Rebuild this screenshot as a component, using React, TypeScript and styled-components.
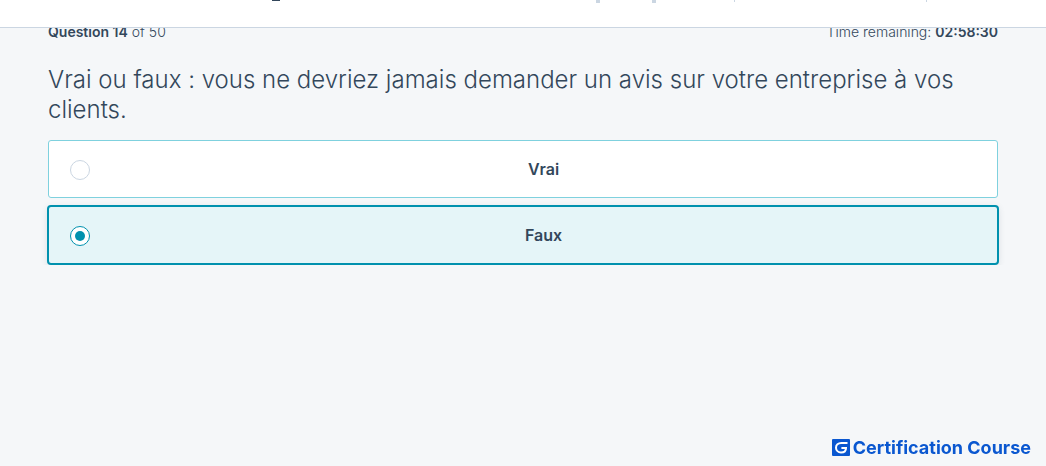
import React, { useState } from 'react';
import styled, { createGlobalStyle } from 'styled-components';

const GlobalStyle = createGlobalStyle`
  *, *::before, *::after { box-sizing: border-box; }
  body {
    margin: 0;
    background: #f5f7f9;
    color: #33475b;
    font-family: Inter, "Liberation Sans", sans-serif;
  }
`;

const Header = styled.header`
  position: relative;
  z-index: 1;
  display: flex;
  align-items: flex-start;
  height: 28px;
  background: #fff;
  border-bottom: 1px solid #cbd6e2;
`;

const TitleEdge = styled.span`
  width: 8px;
  height: 1px;
  margin-left: 272px;
  background: #33475b;
`;

const ToolEdge = styled.span<{ $gap: number; $thin?: boolean }>`
  width: ${(p) => (p.$thin ? 1 : 4)}px;
  height: ${(p) => (p.$thin ? 2 : 3)}px;
  margin-left: ${(p) => p.$gap}px;
  background: #cbd6e2;
`;

const Main = styled.main`
  margin-top: -8px;
  padding: 0 48px;
`;

const Meta = styled.div`
  display: flex;
  justify-content: space-between;
  font-size: 14px;
  line-height: 24px;
  font-weight: 300;
`;

const Strong = styled.strong`
  font-weight: 600;
`;

const Quiz = styled.fieldset`
  min-width: 0;
  margin: 0;
  padding: 0;
  border: 0;
`;

const Prompt = styled.legend`
  padding: 21px 0 15px;
  font-size: 24px;
  line-height: 30px;
  font-weight: 300;
`;

const Options = styled.div`
  display: flex;
  flex-direction: column;
  gap: 7px;
`;

const Option = styled.label<{ $selected: boolean }>`
  display: flex;
  align-items: center;
  height: ${(p) => (p.$selected ? 60 : 58)}px;
  margin: 0 ${(p) => (p.$selected ? -1 : 0)}px;
  padding-left: 21px;
  border: ${(p) => (p.$selected ? '2px solid #0091ae' : '1px solid #7fd1de')};
  border-radius: ${(p) => (p.$selected ? 4 : 3)}px;
  background: ${(p) => (p.$selected ? '#e5f5f8' : '#fff')};
  box-shadow: ${(p) => (p.$selected ? '0 2px 6px rgba(45, 62, 80, 0.12)' : 'none')};
  cursor: pointer;
`;

const Radio = styled.input`
  appearance: none;
  display: grid;
  place-items: center;
  flex: none;
  width: 20px;
  height: 20px;
  margin: 2px 0 0;
  border: 1px solid #cbd6e2;
  border-radius: 50%;
  background: #fff;

  &:checked { border-color: #0091ae; }
  &:checked::before {
    content: "";
    width: 10px;
    height: 10px;
    border-radius: 50%;
    background: #0091ae;
  }
`;

const OptionText = styled.span`
  flex: 1;
  text-align: center;
  font-size: 16px;
  line-height: 24px;
  font-weight: 600;
`;

const Brand = styled.div`
  position: fixed;
  right: 15px;
  bottom: 6px;
  display: flex;
  align-items: center;
  gap: 3px;
  color: #0a57d0;
  font-size: 18px;
  line-height: 24px;
  font-weight: 700;
`;

const answers = ['Vrai', 'Faux'];

export default function App() {
  const [choice, setChoice] = useState('Faux');
  return (
    <>
      <GlobalStyle />
      <Header>
        <TitleEdge />
        <ToolEdge $gap={316} />
        <ToolEdge $gap={52} />
        <ToolEdge $gap={78} $thin />
        <ToolEdge $gap={191} $thin />
      </Header>
      <Main>
        <Meta>
          <span><Strong>Question 14</Strong> of 50</span>
          <span>Time remaining: <Strong>02:58:30</Strong></span>
        </Meta>
        <Quiz>
          <Prompt lang="fr">
            Vrai ou faux : vous ne devriez jamais demander un avis sur votre entreprise à vos clients.
          </Prompt>
          <Options>
            {answers.map((answer) => (
              <Option key={answer} $selected={choice === answer}>
                <Radio
                  type="radio"
                  name="answer"
                  value={answer}
                  checked={choice === answer}
                  onChange={() => setChoice(answer)}
                />
                <OptionText>{answer}</OptionText>
              </Option>
            ))}
          </Options>
        </Quiz>
      </Main>
      <Brand>
        <svg width="18" height="18" viewBox="0 0 18 18" aria-hidden="true">
          <rect width="18" height="17" rx="1" fill="#0a57d0" />
          <path
            d="M15.500 4H9.300C6.200 4 4 5.900 4 8.700S6.200 13.400 9 13.400C12 13.400 14 11.700 14 8.900H9.400"
            fill="none"
            stroke="#fff"
            strokeWidth="2"
          />
        </svg>
        <span>Certification Course</span>
      </Brand>
    </>
  );
}
